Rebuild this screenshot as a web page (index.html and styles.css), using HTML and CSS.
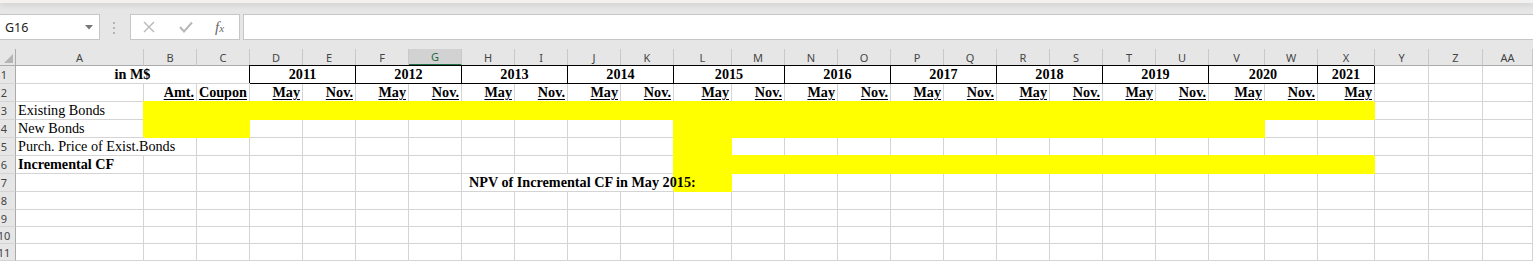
FILE: index.html
```html
<!DOCTYPE html>
<html lang="en">
<head>
    <meta charset="UTF-8">
    <meta name="viewport" content="width=device-width, initial-scale=1.0">
    <title>Bond Refunding - Sheet1</title>
    <link rel="stylesheet" href="styles.css">
</head>
<body>
    <div class="ribbon-edge"></div>

    <div class="formula-bar">
        <div class="name-box">
            <span>G16</span>
            <svg class="drop" width="8" height="5" viewBox="0 0 8 5"><path d="M0 0H8L4 4.5Z"/></svg>
        </div>
        <svg class="grip" width="3" height="13" viewBox="0 0 3 13">
            <rect x="0" y="0" width="2" height="2"/>
            <rect x="0" y="5" width="2" height="2"/>
            <rect x="0" y="10" width="2" height="2"/>
        </svg>
        <div class="fx-box">
            <svg class="btn cancel" width="12" height="12" viewBox="0 0 12 12"><path d="M1 1L11 11M11 1L1 11"/></svg>
            <svg class="btn enter" width="14" height="12" viewBox="0 0 14 12"><path d="M1 6L5 10.5L13 1.5"/></svg>
            <span class="fx">f<span class="fx-x">x</span></span>
        </div>
        <div class="formula-input"></div>
    </div>

    <div class="sheet" id="sheet">
        <div class="corner">
            <svg width="9" height="9" viewBox="0 0 9 9"><path d="M9 0V9H0Z"/></svg>
        </div>
    </div>

    <script>
        const cols = ['A','B','C','D','E','F','G','H','I','J','K','L','M','N','O','P','Q','R','S','T','U','V','W','X','Y','Z','AA'];
        const rowCount = 11;
        const selectedCol = 'G';

        const content = {
            1: { A: { text: 'in M$', cls: 'b c', span: 3 } },
            2: { B: { text: 'Amt.', cls: 'b u r' }, C: { text: 'Coupon', cls: 'b u r' } },
            3: { A: { text: 'Existing Bonds' } },
            4: { A: { text: 'New Bonds' } },
            5: { A: { text: 'Purch. Price of Exist.Bonds', span: 2 } },
            6: { A: { text: 'Incremental CF', cls: 'b' } },
            7: { H: { text: 'NPV of Incremental CF in May 2015:', cls: 'b npv', span: 4 } }
        };

        // year boxes over the May / Nov. pairs, 2021 only has May
        for (let y = 2011; y <= 2021; y++) {
            const i = 3 + (y - 2011) * 2;
            content[1][cols[i]] = { text: String(y), cls: 'year', span: y < 2021 ? 2 : 1 };
            content[2][cols[i]] = { text: 'May', cls: 'b u r' };
            if (y < 2021) content[2][cols[i + 1]] = { text: 'Nov.', cls: 'b u r' };
        }

        const fills = {
            3: [['B', 'X']],
            4: [['B', 'C'], ['L', 'V']],
            5: [['L', 'L']],
            6: [['L', 'X']],
            7: [['L', 'L']]
        };

        function isFilled(row, i) {
            return (fills[row] || []).some(([a, b]) => i >= cols.indexOf(a) && i <= cols.indexOf(b));
        }

        function div(cls, text) {
            const el = document.createElement('div');
            el.className = cls;
            if (text) {
                const span = document.createElement('span');
                span.textContent = text;
                el.appendChild(span);
            }
            return el;
        }

        const sheet = document.getElementById('sheet');

        cols.forEach(c => {
            sheet.appendChild(div('col-head' + (c === selectedCol ? ' selected' : ''), c));
        });

        for (let r = 1; r <= rowCount; r++) {
            sheet.appendChild(div('row-head', String(r)));
            for (let i = 0; i < cols.length; i++) {
                const def = (content[r] || {})[cols[i]] || {};
                let cls = 'cell';
                if (def.cls) cls += ' ' + def.cls;
                if (def.span) cls += ' span' + def.span;
                if (isFilled(r, i)) cls += ' fill';
                sheet.appendChild(div(cls, def.text));
                if (def.span) i += def.span - 1;
            }
        }
    </script>
</body>
</html>
```

FILE: styles.css
```css
body {
    margin: 0;
    background: #e6e6e6;
    overflow: hidden;
    font-family: "Noto Sans", "Open Sans", sans-serif;
}

/* bottom edge of the ribbon */
.ribbon-edge {
    height: 3px;
    background: #f3f2f1;
    box-shadow: 0 1px 6px rgba(0, 0, 0, 0.18);
}

.formula-bar {
    display: flex;
    align-items: flex-start;
    height: 46px;
    padding-top: 11px;
    box-sizing: border-box;
}

.name-box {
    width: 100px;
    height: 26px;
    box-sizing: border-box;
    border: 1px solid #c6c6c6;
    border-left: none;
    background: #fff;
    display: flex;
    align-items: center;
    justify-content: space-between;
    padding: 0 6px 0 5px;
    font-size: 12.5px;
    color: #222;
}

.name-box .drop {
    fill: #777;
}

.grip {
    margin: 8px 0 0 13px;
    fill: #b4b4b4;
}

.fx-box {
    width: 110px;
    height: 26px;
    box-sizing: border-box;
    margin-left: 14px;
    border: 1px solid #c6c6c6;
    background: #fff;
    display: flex;
    align-items: center;
    padding-left: 12px;
}

.btn {
    fill: none;
    stroke: #b8b8b8;
}

.btn.cancel {
    stroke-width: 1.4;
}

.btn.enter {
    margin-left: 24px;
    stroke-width: 2;
}

.fx {
    margin-left: 22px;
    font-family: "Liberation Serif", serif;
    font-style: italic;
    font-size: 15px;
    color: #666;
}

.fx-x {
    font-size: 11px;
}

.formula-input {
    flex: 1;
    height: 26px;
    box-sizing: border-box;
    margin-left: 3px;
    border: 1px solid #c6c6c6;
    border-right: none;
    background: #fff;
}

/* the grid */
.sheet {
    display: grid;
    grid-template-columns: 23px 128px 53px 53px repeat(8, 53px) 58px repeat(9, 53px) 56px 53px 57px 54px 54px 1fr;
    grid-template-rows: 17px repeat(8, 18px) repeat(3, 17px) 1fr;
    height: 213px;
    margin-left: -7px;
    background: #fff;
    overflow: hidden;
}

.corner,
.col-head,
.row-head {
    background: #e6e6e6;
    box-sizing: border-box;
    font-size: 11px;
    color: #444;
}

.corner {
    display: flex;
    align-items: flex-end;
    justify-content: flex-end;
    padding: 0 2px 2px 0;
    border-right: 1px solid #ababab;
    border-bottom: 1px solid #ababab;
    fill: #b4b4b4;
}

.col-head {
    display: flex;
    align-items: center;
    justify-content: center;
    border-right: 1px solid #c8c8c8;
    border-bottom: 1px solid #ababab;
}

.col-head.selected {
    background: #d2d2d2;
    color: #1e6b41;
    border-bottom: 2px solid #217346;
}

.row-head {
    display: flex;
    align-items: center;
    justify-content: center;
    border-right: 1px solid #ababab;
    border-bottom: 1px solid #d4d4d4;
}

.cell {
    box-sizing: border-box;
    display: flex;
    align-items: flex-end;
    padding: 0 2px 1px;
    border-right: 1px solid #d4d4d4;
    border-bottom: 1px solid #d4d4d4;
    white-space: nowrap;
    font-family: "Liberation Serif", "Times New Roman", serif;
    font-size: 14.2px;
    line-height: 15px;
    color: #000;
    min-width: 0;
}

.span2 { grid-column: span 2; }
.span3 { grid-column: span 3; }
.span4 { grid-column: span 4; }

.b { font-weight: bold; }
.c { justify-content: center; }
.r { justify-content: flex-end; }

.u span {
    text-decoration: underline;
    text-underline-offset: 2px;
}

/* the label runs on over the yellow cell next to it */
.npv {
    padding-left: 7px;
}

.npv span {
    position: relative;
    z-index: 1;
}

.year {
    justify-content: center;
    font-weight: bold;
    border-right-color: #000;
    border-bottom-color: #000;
    box-shadow: -1px -1px 0 #000;
}

/* filled cells hide the gridlines round them */
.fill {
    background: #ffff00;
    border-right-color: #ffff00;
    border-bottom-color: #ffff00;
    box-shadow: -1px -1px 0 #ffff00;
}
```
